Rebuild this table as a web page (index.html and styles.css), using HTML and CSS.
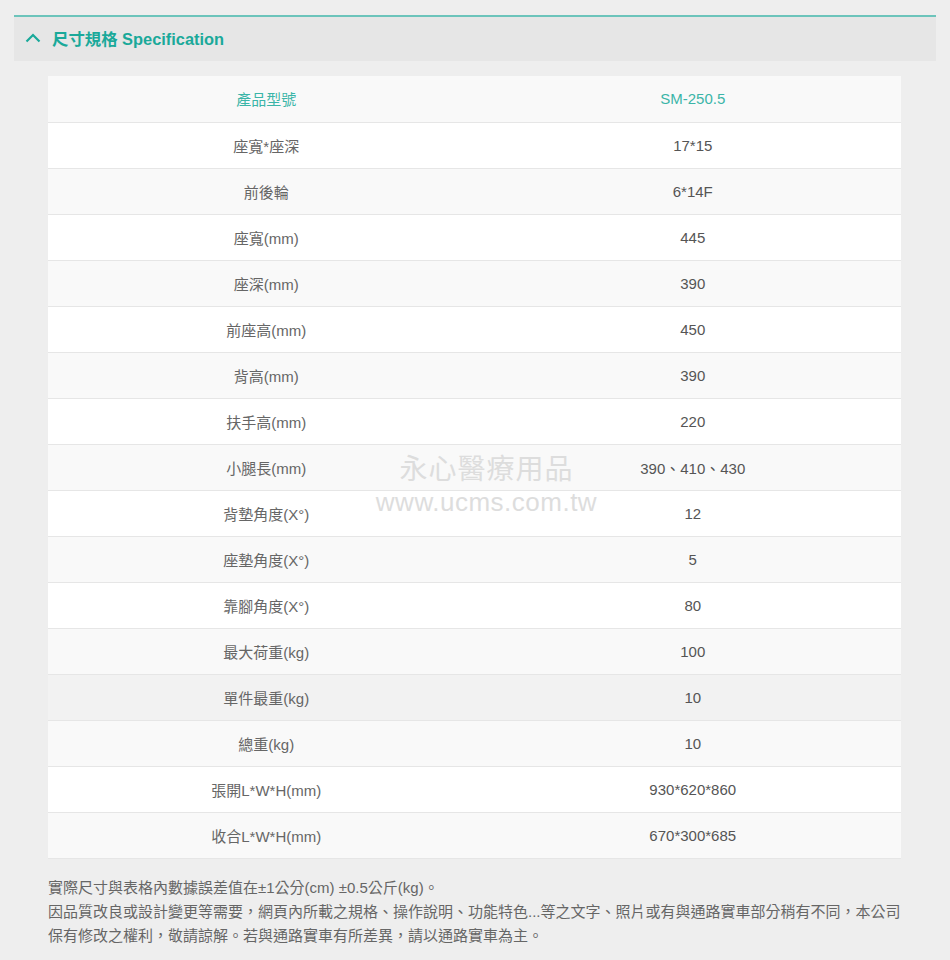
FILE: index.html
```html
<!DOCTYPE html>
<html lang="zh-Hant">
<head>
<meta charset="utf-8">
<title>尺寸規格 Specification</title>
<link rel="stylesheet" href="styles.css">
</head>
<body>
<div class="page">
  <section class="panel">
    <div class="panel-head">
      <svg class="chev" width="16" height="10" viewBox="0 0 16 10"><path d="M1.5 8.5 L8 2 L14.5 8.5" fill="none" stroke="#1aa99a" stroke-width="2.2"/></svg>
      <h2 class="panel-title">尺寸規格 Specification</h2>
    </div>
    <div class="table-wrap">
      <table class="spec">
        <tr class="head"><td>產品型號</td><td>SM-250.5</td></tr>
        <tr><td>座寬*座深</td><td>17*15</td></tr>
        <tr><td>前後輪</td><td>6*14F</td></tr>
        <tr><td>座寬(mm)</td><td>445</td></tr>
        <tr><td>座深(mm)</td><td>390</td></tr>
        <tr><td>前座高(mm)</td><td>450</td></tr>
        <tr><td>背高(mm)</td><td>390</td></tr>
        <tr><td>扶手高(mm)</td><td>220</td></tr>
        <tr><td>小腿長(mm)</td><td>390、410、430</td></tr>
        <tr><td>背墊角度(X°)</td><td>12</td></tr>
        <tr><td>座墊角度(X°)</td><td>5</td></tr>
        <tr><td>靠腳角度(X°)</td><td>80</td></tr>
        <tr><td>最大荷重(kg)</td><td>100</td></tr>
        <tr class="hover"><td>單件最重(kg)</td><td>10</td></tr>
        <tr><td>總重(kg)</td><td>10</td></tr>
        <tr><td>張開L*W*H(mm)</td><td>930*620*860</td></tr>
        <tr><td>收合L*W*H(mm)</td><td>670*300*685</td></tr>
      </table>
      <div class="watermark">
        <div class="wm-cn">永心醫療用品</div>
        <div class="wm-en">www.ucms.com.tw</div>
      </div>
    </div>
    <div class="notes">
      <p>實際尺寸與表格內數據誤差值在±1公分(cm) ±0.5公斤(kg)。</p>
      <p>因品質改良或設計變更等需要，網頁內所載之規格、操作說明、功能特色...等之文字、照片或有與通路實車部分稍有不同，本公司保有修改之權利，敬請諒解。若與通路實車有所差異，請以通路實車為主。</p>
    </div>
  </section>
</div>
</body>
</html>
```

FILE: styles.css
```css
html, body {
  margin: 0;
  padding: 0;
  background: #eeeeee;
}
body {
  font-family: "Liberation Sans", Arial, "Noto Sans CJK TC", sans-serif;
  color: #666;
}
.page {
  padding: 15px 14px 0 14px;
}
.panel-head {
  display: flex;
  align-items: center;
  height: 43px;
  background: #e6e6e6;
  border-top: 2px solid #6cc4bb;
  padding-left: 11px;
  padding-bottom: 1px;
  box-sizing: content-box;
}
.chev {
  display: block;
  margin-right: 11px;
  margin-top: -2px;
}
.panel-title {
  margin: 0;
  margin-top: -2px;
  font-size: 16.4px;
  font-weight: bold;
  color: #1aa99a;
}
.table-wrap {
  position: relative;
  margin: 15px 35px 0 34px;
}
.spec {
  width: 100%;
  border-collapse: collapse;
  font-size: 15px;
}
.spec td {
  height: 46px;
  box-sizing: border-box;
  padding: 0 0 0 10px;
  text-align: center;
  border-bottom: 1px solid #e6e6e6;
  color: #666;
  width: 50%;
}
.spec tr:nth-child(odd) td { background: #f9f9f9; }
.spec tr:nth-child(even) td { background: #ffffff; }
.spec tr.hover td { background: #f2f2f2; }
.spec td:last-child { color: #555; }
.spec tr.head td,
.spec tr.head td:last-child { color: #3bb5a8; }
.watermark {
  position: absolute;
  left: 0;
  right: 0;
  top: 380px;
  text-align: center;
  pointer-events: none;
  padding-left: 24px;
  line-height: 1;
}
.wm-cn {
  font-size: 28px;
  letter-spacing: 1px;
  color: #dddddd;
}
.wm-en {
  font-size: 26px;
  margin-top: 5px;
  letter-spacing: 0.5px;
  color: #dddddd;
}
.notes {
  margin: 17px 35px 0 34px;
  font-size: 15px;
  line-height: 24px;
  color: #666;
}
.notes p {
  margin: 0;
}
```
